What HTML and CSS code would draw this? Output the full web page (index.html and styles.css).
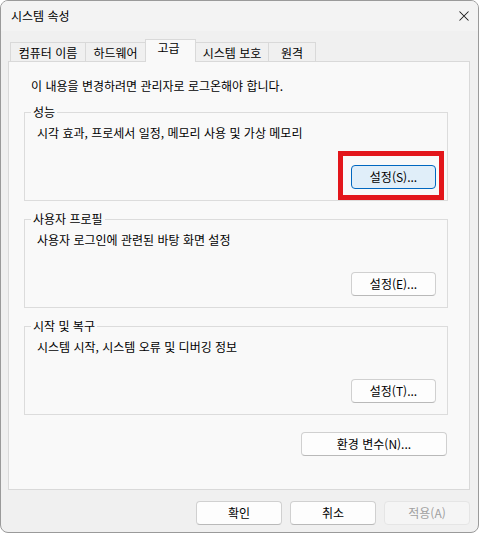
FILE: index.html
```html
<!DOCTYPE html>
<html lang="ko">
<head>
<meta charset="utf-8">
<title>시스템 속성</title>
<link rel="stylesheet" href="styles.css">
</head>
<body>
<div class="window">
  <div class="titlebar">
    <span class="title">시스템 속성</span>
    <svg class="close" width="10" height="10" viewBox="0 0 10 10"><path d="M0.5 0.5 L9.5 9.5 M9.5 0.5 L0.5 9.5" stroke="#1a1a1a" stroke-width="1.05" fill="none"/></svg>
  </div>
  <div class="body">
    <div class="tabs">
      <div class="tab t1">컴퓨터 이름</div>
      <div class="tab t2">하드웨어</div>
      <div class="tab t3 selected">고급</div>
      <div class="tab t4">시스템 보호</div>
      <div class="tab t5">원격</div>
    </div>
    <div class="panel">
      <p class="info">이 내용을 변경하려면 관리자로 로그온해야 합니다.</p>
      <fieldset class="group">
        <legend>성능</legend>
        <p class="desc">시각 효과, 프로세서 일정, 메모리 사용 및 가상 메모리</p>
        <div class="actions"><button class="btn focused">설정(S)...</button></div>
      </fieldset>
      <fieldset class="group">
        <legend>사용자 프로필</legend>
        <p class="desc">사용자 로그인에 관련된 바탕 화면 설정</p>
        <div class="actions"><button class="btn">설정(E)...</button></div>
      </fieldset>
      <fieldset class="group">
        <legend>시작 및 복구</legend>
        <p class="desc">시스템 시작, 시스템 오류 및 디버깅 정보</p>
        <div class="actions"><button class="btn">설정(T)...</button></div>
      </fieldset>
      <div class="env-row"><button class="btn env">환경 변수(N)...</button></div>
    </div>
    <div class="footer">
      <button class="btn foot">확인</button>
      <button class="btn foot">취소</button>
      <button class="btn foot disabled">적용(A)</button>
    </div>
  </div>
  <div class="highlight"></div>
</div>
</body>
</html>
```
FILE: styles.css
```css
html, body {
  margin: 0;
  padding: 0;
  background: #ffffff;
}
body {
  font-family: "Noto Sans CJK KR", "Noto Sans", sans-serif;
  font-size: 12px;
  color: #000000;
}
.window {
  position: relative;
  width: 479px;
  height: 533px;
  box-sizing: border-box;
  border: 1px solid #9a9a9a;
  border-radius: 8px;
  overflow: hidden;
  display: flex;
  flex-direction: column;
  background: #f0f0f0;
}
.titlebar {
  height: 30px;
  flex: none;
  background: #f3f3f3;
  display: flex;
  align-items: center;
  justify-content: space-between;
  padding: 0 9px 0 10px;
}
.title {
  line-height: 16px;
}
.close {
  display: block;
}
.body {
  flex: 1;
  padding: 8px 8px 0 7px;
  display: flex;
  flex-direction: column;
}
.tabs {
  display: flex;
  align-items: flex-end;
  height: 22px;
  padding-left: 2px;
}
.tab {
  box-sizing: border-box;
  height: 19px;
  border: 1px solid #d9d9d9;
  border-bottom: none;
  background: #f0f0f0;
  text-align: center;
  line-height: 17px;
  padding-top: 1px;
  white-space: nowrap;
}
.tab + .tab {
  margin-left: -1px;
}
.t1 { width: 76px; }
.t2 { width: 61px; }
.t3 { width: 51px; }
.t4 { width: 74px; }
.t5 { width: 48px; }
.tab.selected {
  height: 23px;
  margin-bottom: -1px;
  position: relative;
  z-index: 1;
  background: #f9f9f9;
  line-height: 16px;
  padding-top: 0;
  padding-right: 4px;
}
.panel {
  box-sizing: border-box;
  height: 429px;
  border: 1px solid #d9d9d9;
  background: #f9f9f9;
  padding: 16px 0 0 15px;
}
.info {
  margin: 0 0 0 7px;
  line-height: 16px;
}
.group {
  box-sizing: border-box;
  width: 424px;
  min-width: 0;
  margin: 10px 0 0 0;
  padding: 0 11px 11px 6px;
  border: 1px solid #dcdcdc;
}
.group legend {
  padding: 0 2px;
  line-height: 16px;
}
.desc {
  margin: 5px 0 0 6px;
  line-height: 16px;
}
.actions {
  display: flex;
  justify-content: flex-end;
  margin-top: 24px;
}
.btn {
  box-sizing: border-box;
  height: 24px;
  width: 85px;
  margin: 0;
  padding: 0;
  font-family: inherit;
  font-size: 12px;
  line-height: 16px;
  color: #000000;
  background: #fdfdfd;
  border: 1px solid #d0d0d0;
  border-bottom-color: #b9b9b9;
  border-radius: 4px;
}
.btn.focused {
  background: #e0eef9;
  border: 1px solid #0067c0;
}
.env-row {
  width: 424px;
  display: flex;
  justify-content: flex-end;
  margin-top: 17px;
  padding-right: 1px;
  box-sizing: border-box;
}
.btn.env {
  width: 146px;
}
.footer {
  display: flex;
  justify-content: flex-end;
  gap: 8px;
  margin-top: 11px;
  padding-right: 0;
}
.btn.foot {
  width: 86px;
}
.btn.disabled {
  background: #f5f5f5;
  border-color: #e5e5e5;
  color: #a0a0a0;
}
.highlight {
  position: absolute;
  left: 337px;
  top: 150px;
  width: 106px;
  height: 49px;
  box-sizing: border-box;
  border: 5px solid #e3161b;
}
```
